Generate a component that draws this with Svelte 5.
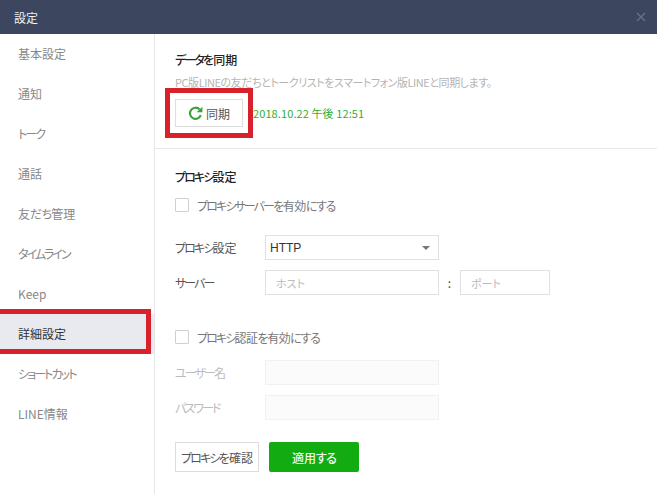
<script>
  const menu = ['基本設定', '通知', 'トーク', '通話', '友だち管理', 'タイムライン', 'Keep', '詳細設定', 'ショートカット', 'LINE情報'];
  const active = '詳細設定';

  // the original UI font sets kana much narrower than kanji
  function runs(text) {
    return text.match(/[ァ-ヶー]+|[ぁ-ん]+|[^ァ-ヶーぁ-ん]+/g).map((t) => ({
      t,
      kind: /[ァ-ヶー]/.test(t[0]) ? 'kata' : /[ぁ-ん]/.test(t[0]) ? 'hira' : 'other'
    }));
  }
</script>

{#snippet jp(text)}{#each runs(text) as r}<span class={r.kind}>{r.t}</span>{/each}{/snippet}

<div class="window">
  <header class="titlebar">
    <span>設定</span>
    <svg class="close" width="10" height="10" viewBox="0 0 10 10">
      <path d="M1 1L9 9M9 1L1 9" />
    </svg>
  </header>

  <div class="body">
    <nav class="sidebar">
      {#each menu as item}
        <div class="item" class:active={item === active}>{@render jp(item)}</div>
      {/each}
    </nav>

    <main class="content">
      <section class="sync">
        <h2>{@render jp('データを同期')}</h2>
        <p class="desc">PC版LINEの友だちとトークリストをスマートフォン版LINEと同期します。</p>
        <div class="sync-row">
          <button class="btn sync-btn">
            <svg width="15" height="15" viewBox="0 0 14 14">
              <path d="M11.9 8.6A5.2 5.2 0 1 1 10.8 3.2" />
              <path class="head" d="M8.2 5.8L13.4 5.8L13.4 0.8Z" />
            </svg>
            同期
          </button>
          <span class="date">2018.10.22 午後 12:51</span>
        </div>
      </section>

      <section class="proxy">
        <h2>{@render jp('プロキシ設定')}</h2>
        <label class="check"><span class="box"></span><span>{@render jp('プロキシサーバーを有効にする')}</span></label>

        <div class="row first">
          <span class="label">{@render jp('プロキシ設定')}</span>
          <div class="select">
            <span>HTTP</span>
            <span class="arrow"></span>
          </div>
        </div>
        <div class="row">
          <span class="label">{@render jp('サーバー')}</span>
          <div class="input">ホスト</div>
          <span class="colon">:</span>
          <div class="input port">ポート</div>
        </div>

        <label class="check auth"><span class="box"></span><span>{@render jp('プロキシ認証を有効にする')}</span></label>

        <div class="row disabled first-auth">
          <span class="label">{@render jp('ユーザー名')}</span>
          <div class="input"></div>
        </div>
        <div class="row disabled">
          <span class="label">{@render jp('パスワード')}</span>
          <div class="input"></div>
        </div>

        <div class="actions">
          <button class="btn confirm">{@render jp('プロキシを確認')}</button>
          <button class="btn apply">{@render jp('適用する')}</button>
        </div>
      </section>
    </main>
  </div>

  <div class="mark mark-nav"></div>
  <div class="mark mark-sync"></div>
</div>

<style>
  :global(body) {
    margin: 0;
    background: #fff;
  }

  .window {
    position: relative;
    width: 657px;
    height: 494px;
    overflow: hidden;
    font-family: "Noto Sans CJK JP", "Liberation Sans", sans-serif;
    font-size: 12px;
    font-feature-settings: "palt";
    color: #333;
  }

  .kata {
    letter-spacing: -1.9px;
  }

  .hira {
    letter-spacing: -0.8px;
  }

  .titlebar {
    height: 34px;
    padding: 0 11px 0 14px;
    display: flex;
    align-items: center;
    justify-content: space-between;
    background: #3c465f;
    color: #f0f1f4;
  }

  .close path {
    stroke: #69728a;
    stroke-width: 1.2;
    fill: none;
  }

  .body {
    display: flex;
    height: 460px;
  }

  .sidebar {
    width: 154px;
    flex: none;
    border-right: 1px solid #e6e7ea;
  }

  .item {
    height: 40px;
    line-height: 40px;
    padding-left: 18px;
    color: #888;
  }

  .item.active {
    background: #e8eaf0;
    color: #333;
  }

  .content {
    flex: 1;
  }

  h2 {
    margin: 0;
    font-size: 12px;
    line-height: 18px;
    font-weight: 500;
    color: #222;
  }

  .sync {
    height: 115px;
    padding: 17px 20px 0;
    box-sizing: border-box;
    border-bottom: 1px solid #e6e7ea;
  }

  .desc {
    margin: 5px 0 0;
    font-size: 11px;
    line-height: 16px;
    color: #b4b4b4;
    letter-spacing: -0.45px;
    white-space: nowrap;
  }

  .sync-row {
    margin-top: 9px;
    display: flex;
    align-items: center;
    gap: 10px;
  }

  .btn {
    font: inherit;
    font-feature-settings: "palt";
    padding: 0;
    box-sizing: border-box;
  }

  .sync-btn {
    width: 68px;
    height: 28px;
    display: flex;
    align-items: center;
    justify-content: center;
    gap: 3px;
    background: #fff;
    border: 1px solid #dcdedb;
    color: #555;
  }

  .sync-btn path {
    fill: none;
    stroke: #35a335;
    stroke-width: 2;
  }

  .sync-btn path.head {
    fill: #35a335;
    stroke: none;
  }

  .date {
    color: #2fae2f;
    font-size: 11px;
    letter-spacing: 0.1px;
  }

  .proxy {
    padding: 19px 20px 0;
  }

  .check {
    margin-top: 12px;
    display: flex;
    align-items: center;
    gap: 8px;
    height: 14px;
    color: #777;
  }

  .check .hira {
    letter-spacing: -1.4px;
  }

  .check .other {
    letter-spacing: -0.5px;
  }

  .box {
    width: 14px;
    height: 14px;
    flex: none;
    box-sizing: border-box;
    border: 1px solid #cfd0d2;
    border-radius: 1px;
    background: #fff;
  }

  .row {
    display: flex;
    align-items: center;
    margin-top: 10px;
  }

  .row.first {
    margin-top: 23px;
  }

  .row.first-auth {
    margin-top: 16px;
  }

  .label {
    width: 90px;
    flex: none;
    color: #555;
  }

  .select,
  .input {
    width: 174px;
    height: 25px;
    box-sizing: border-box;
    border: 1px solid #e0e0e0;
    display: flex;
    align-items: center;
  }

  .select {
    justify-content: space-between;
    padding: 0 8px 0 4px;
    color: #333;
    font-family: "Liberation Sans", sans-serif;
    font-weight: 500;
    font-size: 12px;
  }

  .arrow {
    width: 0;
    height: 0;
    border-left: 4px solid transparent;
    border-right: 4px solid transparent;
    border-top: 4px solid #777;
  }

  .input {
    padding-left: 10px;
    color: #bbb;
    font-size: 11px;
  }

  .input.port {
    width: 90px;
  }

  .colon {
    width: 21px;
    text-align: center;
    color: #444;
  }

  .auth {
    margin-top: 35px;
  }

  .disabled .label {
    color: #bbb;
  }

  .disabled .input {
    background: #fbfbfb;
    border-color: #f1f1f1;
  }

  .actions {
    margin-top: 22px;
    display: flex;
    gap: 10px;
  }

  .confirm {
    width: 84px;
    height: 30px;
    background: #fff;
    border: 1px solid #dcdcdc;
    color: #555;
    white-space: nowrap;
  }

  .apply {
    width: 90px;
    height: 30px;
    background: #12ab12;
    border: none;
    border-radius: 2px;
    color: #f2fbf2;
    font-weight: 500;
  }

  .mark {
    position: absolute;
    box-sizing: border-box;
    border: 5px solid #d8222b;
    pointer-events: none;
  }

  .mark-nav {
    left: -5px;
    top: 309px;
    width: 156px;
    height: 45px;
  }

  .mark-sync {
    left: 165px;
    top: 88px;
    width: 88px;
    height: 50px;
  }
</style>
